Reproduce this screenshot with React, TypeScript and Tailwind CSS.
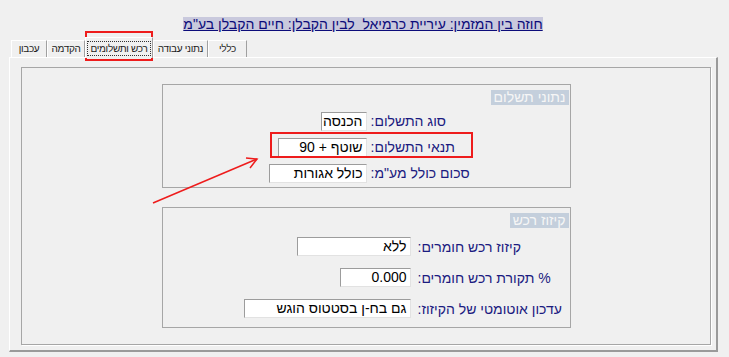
import React from 'react';

type Row = { label: string; value: string; width: number };

const paymentRows: Row[] = [
  { label: 'סוג התשלום:', value: 'הכנסה', width: 46 },
  { label: 'תנאי התשלום:', value: 'שוטף + 90', width: 89 },
  { label: 'סכום כולל מע"מ:', value: 'כולל אגורות', width: 98 },
];

const offsetRows: Row[] = [
  { label: 'קיזוז רכש חומרים:', value: 'ללא', width: 114 },
  { label: '% תקורת רכש חומרים:', value: '0.000', width: 71 },
  { label: 'עדכון אוטומטי של הקיזוז:', value: 'גם בח-ן בסטטוס הוגש', width: 167 },
];

const tabs = [
  { label: 'עכבון', width: 36 },
  { label: 'הקדמה', width: 38 },
  { label: 'רכש ותשלומים', width: 68, active: true },
  { label: 'נתוני עבודה', width: 55 },
  { label: 'כללי', width: 39 },
];

function Field({ value, width }: { value: string; width: number }) {
  return (
    <div
      dir="rtl"
      style={{ width }}
      className="h-[19px] bg-white border border-t-[#9c9c9c] border-l-[#9c9c9c] border-r-[#e2e2e2] border-b-[#e2e2e2] pr-[3px] text-[14px] leading-[17px] text-black whitespace-nowrap overflow-hidden"
    >
      {value}
    </div>
  );
}

function Group({
  title,
  rows,
  height,
  column,
  gap,
  rowHeight,
}: {
  title: string;
  rows: Row[];
  height: string;
  column: string;
  gap: string;
  rowHeight: string;
}) {
  return (
    <div className={`w-[409px] ${height} border border-[#a6a6a6] flex flex-col`}>
      <div className="flex justify-end pr-[1px] mt-[5px]">
        <span dir="rtl" className="h-[15px] leading-[15px] bg-[#c4cfdc] text-[#f6f6f6] text-[14px] px-[3px]">
          {title}
        </span>
      </div>
      <div className="mt-[3px] flex flex-col">
        {rows.map((r) => (
          <div key={r.label} className={`flex items-center ${rowHeight}`}>
            <div className={`${column} flex justify-end`}>
              <Field value={r.value} width={r.width} />
            </div>
            <span dir="rtl" className={`${gap} text-[14px] text-[#1b1b80] whitespace-nowrap leading-[16px]`}>
              {r.label}
            </span>
          </div>
        ))}
      </div>
    </div>
  );
}

export default function App() {
  return (
    <div className="relative w-[729px] h-[357px] bg-[#f0f0f0] overflow-hidden font-['Liberation_Sans',sans-serif]">
      {/* title */}
      <div className="h-[37px] pt-[17px] flex justify-center pr-[3px]">
        <span
          dir="rtl"
          className="h-[14px] leading-[14px] bg-[#c9c9dd] text-[#0c0c7a] text-[14px] underline whitespace-pre"
        >
          {'חוזה בין המזמין: עיריית כרמיאל  לבין הקבלן: חיים הקבלן בע"מ'}
        </span>
      </div>

      {/* tabs */}
      <div className="flex items-end h-[20px] pl-[11px]">
        {tabs.map((t) =>
          t.active ? (
            <div
              key={t.label}
              style={{ width: t.width }}
              className="relative z-10 h-[21px] -mb-[1px] bg-[#f0f0f0] border-t border-l border-white border-r border-r-[#a0a0a0] flex items-center justify-center overflow-hidden"
            >
              <span dir="rtl" className="px-[2px] h-[15px] leading-[13px] border border-dotted border-[#333] text-[10px] tracking-[-0.3px] text-[#222] whitespace-nowrap">
                {t.label}
              </span>
            </div>
          ) : (
            <div
              key={t.label}
              style={{ width: t.width }}
              className="h-[17px] bg-[#f0f0f0] border-t border-l border-white border-r border-r-[#a0a0a0] flex items-center justify-center overflow-hidden"
            >
              <span dir="rtl" className="text-[10px] tracking-[-0.3px] text-[#222] leading-[14px] whitespace-nowrap">
                {t.label}
              </span>
            </div>
          )
        )}
      </div>

      {/* tab panel */}
      <div className="ml-[9px] w-[709px] h-[295px] border-t border-l border-t-white border-l-white border-r-2 border-b-2 border-r-[#9a9a9a] border-b-[#9a9a9a]">
        <div className="mt-[9px] ml-[11px] w-[690px] h-[278px] border border-[#a6a6a6] shadow-[1px_1px_0_#ffffff] flex flex-col items-center pt-[16px] gap-[19px]">
          <Group
            title="נתוני תשלום"
            rows={paymentRows}
            height="h-[104px]"
            column="w-[204px]"
            gap="ml-[4px]"
            rowHeight="h-[26px]"
          />
          <Group
            title="קיזוז רכש"
            rows={offsetRows}
            height="h-[121px]"
            column="w-[248px]"
            gap="ml-[7px]"
            rowHeight="h-[31px]"
          />
        </div>
      </div>

      {/* annotations */}
      <div className="absolute left-[85px] top-[31px] w-[68px] h-[30px] border-2 border-[#ee1c1c] pointer-events-none" />
      <div className="absolute left-[270px] top-[132px] w-[203px] h-[26px] border-2 border-[#ee1c1c] pointer-events-none" />
      <svg className="absolute left-0 top-0 pointer-events-none" width="729" height="357">
        <line x1="153" y1="203" x2="257" y2="159" stroke="#ee1c1c" strokeWidth="1.5" />
        <polyline points="246,158 257,159 250,168" fill="none" stroke="#ee1c1c" strokeWidth="1.5" />
      </svg>
    </div>
  );
}
